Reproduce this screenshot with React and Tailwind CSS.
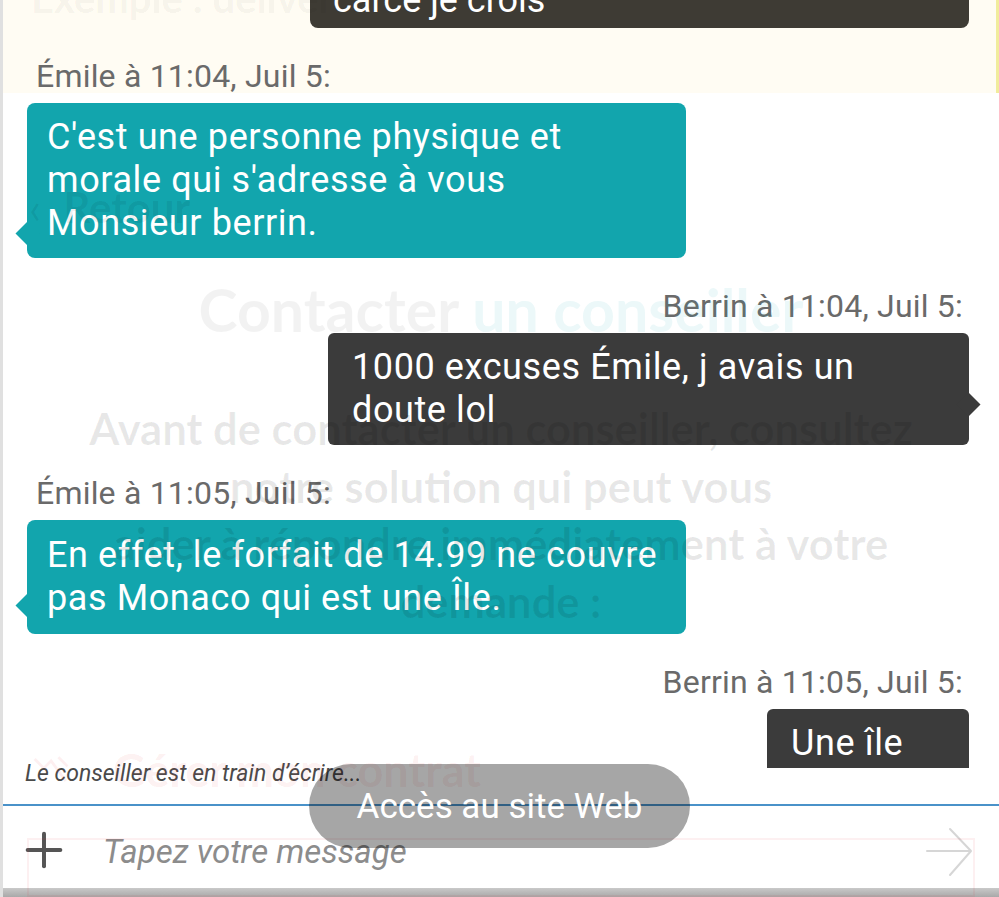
import { Plus } from "lucide-react";

const Header = ({ name, time, right }) => (
  <div className={`h-[75px] shrink-0 flex items-end pb-[10px] ${right ? "justify-end pr-[6px]" : "pl-[9px]"}`}>
    <p className="text-[32px] leading-[34px] tracking-[0.2px] text-[#6a6a6a]">
      {name} à {time}, Juil 5:
    </p>
  </div>
);

const Left = ({ children, tail = 24, className = "" }) => (
  <div className={`relative shrink-0 w-[659px] rounded-[8px] bg-[#12a5ad] px-[20px] py-[13px] text-[36px] leading-[43px] tracking-[0.6px] text-white ${className}`}>
    <span className="absolute left-[-8px] w-[17px] h-[17px] rotate-45 bg-[#12a5ad]" style={{ bottom: tail - 8 }} />
    <p className="relative">{children}</p>
  </div>
);

const Right = ({ children, w, tail }) => (
  <div className={`relative shrink-0 self-end rounded-[6px] bg-[#3b3b3b] px-[24px] py-[13px] text-[36px] leading-[43px] tracking-[0.6px] text-white ${w}`}>
    {tail && <span className="absolute right-[-8px] w-[17px] h-[17px] rotate-45 bg-[#3b3b3b]" style={{ bottom: tail - 8 }} />}
    <p className="relative">{children}</p>
  </div>
);

export default function App() {
  return (
    <div className="relative w-[999px] h-[897px] overflow-hidden bg-white border-l-[3px] border-[#e0e0e0] flex flex-col font-['Roboto',sans-serif]">
      <div className="absolute left-0 top-0 w-full h-[93px] bg-[#fffcf3] border-r-[3px] border-[#f1ec9c]" />

      {/* messages */}
      <div className="relative h-[768px] shrink-0 overflow-hidden flex flex-col pl-[24px] pr-[30px]">
        <div className="shrink-0 self-end w-[659px] h-[65px] -mt-[37px] rounded-b-[8px] bg-[#3e3b34] px-[23px] pt-[16px] text-[36px] leading-[43px] text-white">
          carcé je crois
        </div>
        <Header name="Émile" time="11:04" />
        <Left tail={24}>
          C'est une personne physique et
          <br />
          morale qui s'adresse à vous
          <br />
          Monsieur berrin.
        </Left>
        <Header name="Berrin" time="11:04" right />
        <Right w="w-[641px]" tail={40}>
          1000 excuses Émile, j avais un
          <br />
          doute lol
        </Right>
        <Header name="Émile" time="11:05" />
        <Left tail={28} className="py-[14px]">
          En effet, le forfait de 14.99 ne couvre
          <br />
          pas Monaco qui est une Île.
        </Left>
        <Header name="Berrin" time="11:05" right />
        <Right w="w-[202px]">Une île</Right>
      </div>

      {/* typing */}
      <div className="relative h-[36px] shrink-0 pl-[22px]">
        <p className="-mt-[8px] text-[23px] leading-[28px] italic text-[#4a4a4a]">Le conseiller est en train d’écrire...</p>
      </div>
      <div className="h-[2px] shrink-0 bg-[#4a92c9]" />

      {/* input */}
      <div className="h-[82px] shrink-0 flex items-center pt-[10px] pl-[13px] pr-[26px]">
        <Plus size={56} strokeWidth={1.7} className="text-[#555] -mt-[4px]" />
        <span className="ml-[31px] flex-1 text-[33px] italic text-[#8c8c8c]">Tapez votre message</span>
        <svg width="48" height="50" viewBox="0 0 48 50" fill="none" stroke="#d6d6d6" strokeWidth="2" strokeLinecap="round" strokeLinejoin="round">
          <path d="M2 24h43M25 2l21 22-21 24" />
        </svg>
      </div>
      <div className="h-[9px] shrink-0 bg-gradient-to-b from-[#c9c9c9] to-[#a9a9a9]" />

      {/* ghost of the previous page */}
      <div className="pointer-events-none absolute inset-0 flex flex-col font-['Lato',sans-serif] font-bold">
        <p className="-mt-[22px] pl-[28px] text-[40px] leading-[40px] text-black/[0.05]">Exemple : deliver</p>
        <div className="mt-[169px] flex items-center gap-[22px] pl-[26px] text-[42px] leading-[40px] text-black/[0.07]">
          <span className="text-[44px] font-normal">‹</span>
          <span>Retour</span>
        </div>
        <p className="mt-[53px] text-center text-[59px] leading-[60px]">
          <span className="text-black/[0.05]">Contacter </span>
          <span className="text-[#12a5ad]/[0.08]">un conseiller</span>
        </p>
        <p className="mt-[60px] text-center text-[43.5px] leading-[57.5px] text-black/[0.09]">
          Avant de contacter un conseiller, consultez
          <br />
          notre solution qui peut vous
          <br />
          aider à répondre immédiatement à votre
          <br />
          demande :
        </p>
        <div className="mt-[115px] flex items-center gap-[40px] pl-[28px] text-[45px] leading-[50px] text-[#e0303a]/[0.08]">
          <svg width="42" height="40" viewBox="0 0 46 40" fill="none" stroke="currentColor" strokeWidth="3">
            <path d="M4 8l10 10 8-8 16 22M30 6l10 10" />
          </svg>
          <span>Gérer mon contrat</span>
        </div>
        <div className="mt-[43px] mx-[24px] h-[80px] border-2 border-[#e0303a]/[0.07]" />
      </div>

      {/* toast */}
      <div className="absolute left-[306px] top-[764px] w-[381px] h-[84px] rounded-full bg-black/[0.35] flex items-center justify-center pt-[2px] text-[35px] text-white">
        Accès au site Web
      </div>
    </div>
  );
}
